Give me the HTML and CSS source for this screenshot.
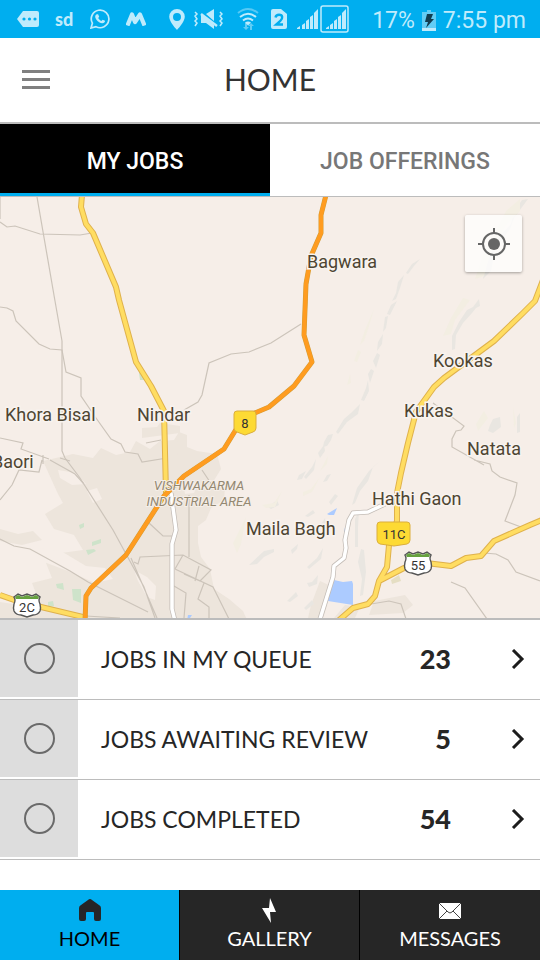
FILE: index.html
```html
<!DOCTYPE html>
<html lang="en">
<head>
    <meta charset="UTF-8">
    <meta name="viewport" content="width=device-width, initial-scale=1.0">
    <title>Home</title>
    <link rel="stylesheet" href="styles.css">
</head>
<body>
    <div class="statusbar">
        <div class="status-group notifications">
            <svg width="22" height="18" viewBox="0 0 22 18"><path fill="currentColor" d="M6 1h14a2 2 0 0 1 2 2v12a2 2 0 0 1-2 2H6L0 9z"/><g fill="#00aeef"><circle cx="7" cy="9" r="1.6"/><circle cx="12.500" cy="9" r="1.600"/><circle cx="18" cy="9" r="1.600"/></g></svg>
            <span class="app-mark">sd</span>
            <svg width="20" height="20" viewBox="0 0 20 20"><path fill="none" stroke="currentColor" stroke-width="1.700" d="M1 19l1.400-4.800A8.800 8.800 0 1 1 6 17.700z"/><path fill="currentColor" d="M6.700 5.300h1.400l1.100 2.500-1 1.300c.8 1.400 1.800 2.300 3.200 2.900l1.200-1.300 2.400 1.100c.2 1.700-1.400 2.700-2.900 2.500-3.500-.7-6.400-3.600-6.900-6.300-.1-1.200.6-2.300 1.500-2.700z"/></svg>
            <svg width="20" height="14" viewBox="0 0 20 14"><path fill="none" stroke="currentColor" stroke-width="4.200" stroke-linejoin="round" d="M1.500 13.500L6 2.500l3 7.500 5-7.500 4.500 11"/></svg>
        </div>
        <div class="status-group system">
            <svg width="16" height="21" viewBox="0 0 16 21"><path fill="currentColor" fill-rule="evenodd" d="M8 0a7.800 7.800 0 0 1 7.800 7.800C15.800 13 8 21 8 21S.2 13 .2 7.800A7.800 7.800 0 0 1 8 0zm0 4a4 4 0 1 0 0 8 4 4 0 0 0 0-8z"/></svg>
            <svg width="30" height="22" viewBox="0 0 30 22"><path fill="currentColor" d="M13 6l8-5v12zM8 7v8h5l8 6v-4L9 7z"/><path stroke="currentColor" stroke-width="2.400" d="M8 6l16 12"/><path fill="none" stroke="currentColor" stroke-width="1.500" d="M2 4l2 2-2 2 2 3-2 2 2 2-2 3M27 4l2 2-2 2 2 3-2 2 2 2-2 3"/></svg>
            <svg width="32" height="24" viewBox="0 0 32 24"><g fill="none" stroke="currentColor" stroke-width="2"><path opacity=".45" d="M7 6q10-8 20 0"/><path d="M9 10q8-6.500 16 0M12 13.500q5-4 10 0"/></g><path fill="currentColor" d="M14 15.500q3-2 6 0l-3 3z"/><path opacity=".5" fill="currentColor" d="M14 16h2v4h2l-3 3-3-3h2zM19 23v-4h-2l3-3 3 3h-2v4z"/></svg>
            <svg width="18" height="22" viewBox="0 0 18 22"><path fill="currentColor" d="M2 1h8l6 5v13a2 2 0 0 1-2 2H2a2 2 0 0 1-2-2V3a2 2 0 0 1 2-2z"/><path fill="none" stroke="#00aeef" stroke-width="2.400" d="M4.500 9.500Q5 6.800 8 6.800c4 0 4 3.700 1.300 6L5.200 16.500H12"/></svg>
            <svg width="52" height="28" viewBox="0 0 52 28"><path fill="currentColor" d="M0 24v-1l3-2v3zM5 24v-4l3-2v6zM9 24v-8l3-2v10zM13 24V12l3-2v14zM17 24V8l4-4v20zM29 24v-1l3-2v3zM33 24v-4l3-2v6zM37 24v-8l3-2v10zM41 24V12l3-2v14zM45 24V8l4-4v20z"/><rect x="24" y="1" width="27" height="26" rx="2" fill="none" stroke="currentColor" stroke-width="1.500"/></svg>
        </div>
        <div class="status-group clock">
            <span>17%</span>
            <svg width="14" height="21" viewBox="0 0 14 21"><path fill="#62cdf5" d="M0 2h5V0h4v2h5v19H0z"/><path fill="currentColor" d="M0 18h14v3H0z"/><path fill="#123d50" d="M5 4h6L9 9h3l-8 9 2-6H3z"/></svg>
            <span>7:55 pm</span>
        </div>
    </div>

    <header class="header">
        <button type="button" class="menu-button" aria-label="Menu"><span></span><span></span><span></span></button>
        <h1>HOME</h1>
    </header>

    <nav class="tabs">
        <a href="#my-jobs" class="tab active">MY JOBS</a>
        <a href="#offerings" class="tab">JOB OFFERINGS</a>
    </nav>

    <main>
        <section class="map">
            <svg class="map-canvas" viewBox="0 197 540 421" preserveAspectRatio="xMidYMid slice">
                <rect y="197" width="540" height="421" fill="#f6eee8"/>

                <!-- built-up areas -->
                <g fill="#ede5dc">
                    <path d="M43 461l30-7 20 4 8-10 15 7 14-3 6-11 14 8 10-8 14-1 5-8 8 3v12l10 4 20 3 4 15-8 13 12 6-1 12-13 8-5 12-8 6v17l3 14 9 12 4 20 15 10 14 12 8 18H0v-27l20 3 17-9-5-13 20-5-6-15 15-10 22-3-9-15-20-6-9-15 18-11-5-9z"/>
                    <path d="M142 428l15-1 3-4 20 3v7l-38 5zM177 440l10 7v16l-9 5zM0 529l18 5 15-3 9 9-20 5-22-4z"/>
                    <path d="M320 581l11 5-4 20-4 12h-15l3-13zM374 601l31-6 8 10-10 8-34 2zM345 605l15 2-5 11h-21z"/>
                </g>
                <path fill="#f6eee8" d="M36 548l25 3 25 15 19 2 8 11-18 4-27-12-24-9zM134 570l13 7 9 9-1 14-8-3-9-16zM87 491l10-3 5 11-9 4zM58 470l18 3 10 11-14 1-12-7zM199 482l-5 11-9 1-2-10z"/>

                <!-- hills -->
                <g fill="#e9e6e1">
                    <path d="M528 199l-6 1-8 12-3 12-12 13-13 26-3 16 8-8 4-22 15-20 4-11zM479 299l-6 8-6 3-8 12-7 14v14l3-1 1-14 7-12 9-10 4-5 4-2z"/>
                    <path d="M420 259l-8 5-6 9 2 1 6-8zM404 275l-6 7-2 11-4 8 4-2 4-11z"/>
                    <path d="M397 301l-6 4-4 9 3 1 4-8zM388 316l-3 1-2 15 3-4zM383 334l-5 8-1 9 5-7zM377 353l-4 8 3 7 4-13zM371 369l-3 5 2 9 4-12zM368 380l-2 8-5 12 3 1 5-10zM360 404l-9 9-7 6-8 13 2 2 9-12 11-8z"/>
                    <path d="M333 434l-5 1-4 7-1 5 4-1 4-6zM324 445l-6 8 2 5 5-7zM316 459l-4 8-8 10 2 2 8-9z"/>
                    <path d="M493 419l7-2 1 10-8 6-5-2 2-6zM517 417l3-4v19l-3 1zM380 461l-7 6-5 14-8 10-5 12-3 2 5-17 12-17zM359 511l-4 8v28h3v-20zM361 549l-3 13 4 17-2 17 3-1 3-23-2-22z"/>
                    <path d="M264 551l-15 14 8-1 7-7 10-5v-3zM306 471l-7 4-2 5 5-1zM313 510l-8 6 3 1 7-4zM325 518l-5 8-7 5h4l9-8zM298 544l-7 6 1 4 5-5zM323 548l-6 10-10 9 2 2 12-10zM296 592l-9 9 3 1 8-6zM312 600l-8 8 2 2 8-6zM277 500l-9 7 3 2 8-4zM335 494l-6 8 2 3 7-9zM301 525l-7 4 1 4 8-4zM318 575l-6 7-5 1 2 4 8-3zM327 475l-4 7 4-1 4-7z"/>
                </g>
                <g fill="#f3eee2">
                    <path d="M520 199l-14 12-10 20-13 24-8 24 9-3 8-28 15-24 13-13zM470 300l-15 20-4 14-8 2 8-18 12-20zM374 309l-9 21-5 15 4-4 5-15zM358 350l-4 11 3 1 4-10zM350 374l-3 11 4-2zM484 411l-8 13 2 7 10-13zM513 407l3 16-2 5z"/>
                    <path d="M246 517l-9 18-4 8 4 10 4-9zM282 491l-8 12-12 2 4 3 9-1zM320 477l-9 12-8 3v4l9-4zM328 456l-8 15 7-7z"/>
                </g>
                <g fill="#cee3ca"><path d="M139 373h5v7h-4zM79 525l5-2v4l-4 2zM92 542l9-3v4l-9 3zM86 550l8-1 2 2-8 4zM56 584l7-1 1 7-7-2zM48 602l5-1 1 5-6 1zM72 589h9v14l-8-3z"/></g>

                <path fill="#accbff" d="M334 580l9 2 9-1 1 3v21l-25-4 3-14zM337 508l-10 6 2 1h5zM345 527l1 6-2-1zM188 615h4l-2 3-3 3z"/>
                <path fill="#e5dec3" d="M391 580l8-5 2 6-9 3z"/>

                <!-- local roads -->
                <g fill="none" stroke="#ccc4ba" stroke-width="1.200">
                    <path d="M0 222l7 5 8-1 25 8 40 1 12-2M0 197v22"/>
                    <path d="M37 197l18 104 7 40v110l3 7 15 20 33 52 31 57 11 31M131 558l26 60"/>
                    <path d="M0 307l7 1 6 3 3 10 23 23 11 5 12 1 4 22 15 6v18l15 22 15 21 10 5 4 8 13 2 4 8 25-4"/>
                    <path d="M0 438l23 5-2 6 28 10M42 460l-3 12-20-2-7 15-12 15M43 455v9M70 461l-10-3"/>
                    <path d="M50 460l25 14 9 10M0 539l14 7 16 3 40 22 18 11 60 30M86 616l34 2M161 440l-15 3M184 410l14-8 4-7 7-32 22-9 18-2 22-9 30-19"/>
                    <path d="M149 523l14 13h10M189 495v62M134 562l4 2 2-7 43-2 28 15-11 11-16-7 0 0M195 581l4-15M183 555l-8 14M175 569l38 18 16 32M204 583l-6 16 11 8v12M174 586l12 7-2 25"/>
                    <path d="M433 403l31 23-3 4-5 1-4 8v8l32 18M474 460l16 4 2 7 8 6 17 6-2 12-10 26 16 6M484 553l12 1 12 6 8 12 24 9M451 582l14 6 22 31M371 604l18-3 12 3 5 15M202 470l12 18"/>
                </g>
                <path fill="none" stroke="#c3bcb6" stroke-width="5" stroke-linejoin="round" d="M171 493l5 37-4 14v65l3 12M385 504l-17 8-15 1-4 7-4 20 1 8-2 10-10 8-1 11-13 42"/>
                <path fill="none" stroke="#fff" stroke-width="3.500" stroke-linejoin="round" d="M171 493l5 37-4 14v65l3 12M385 504l-17 8-15 1-4 7-4 20 1 8-2 10-10 8-1 11-13 42"/>

                <!-- state roads, then the national highway -->
                <g fill="none" stroke-linejoin="round">
                    <path stroke="#dfb14c" stroke-width="6" d="M82 195l-1 12 5 17 7 9 23 54 3 13 17 62 15 24 13 25 2 82M543 280l-8 21-12 12-29 28-50 37-10 9-18 25-8 31-7 30-4 20v28l-8 24-2 22-8 14-4 15-7 8-15 4-15 13M379 581l25-13 14-6 33 4 15-8 15-2 13-15 36-16 12-5M0 595l20 7 67 16"/>
                    <path stroke="#ffdd62" stroke-width="4" d="M82 195l-1 12 5 17 7 9 23 54 3 13 17 62 15 24 13 25 2 82M543 280l-8 21-12 12-29 28-50 37-10 9-18 25-8 31-7 30-4 20v28l-8 24-2 22-8 14-4 15-7 8-15 4-15 13M379 581l25-13 14-6 33 4 15-8 15-2 13-15 36-16 12-5M0 595l20 7 67 16"/>
                    <path stroke="#d49c35" stroke-width="5" d="M326 195l-5 20v18l-10 23-5 28-2 51 8 27-18 24-25 21-26 11-19 31-40 27-20 20-38 59-35 33-5 8-1 26"/>
                    <path stroke="#ff9c20" stroke-width="4" d="M326 195l-5 20v18l-10 23-5 28-2 51 8 27-18 24-25 21-26 11-19 31-40 27-20 20-38 59-35 33-5 8-1 26"/>
                </g>

                <!-- road shields -->
                <g class="shield-text">
                    <path fill="#fdda34" stroke="#dbae3c" d="M237 411h16q3 0 3 3v14q0 3-3 4l-8 3-8-3q-3-1-3-4v-14q0-3 3-3z"/>
                    <text x="245" y="428">8</text>
                    <path fill="#fdda34" stroke="#dbae3c" d="M380 522h27q3 0 3 3v15q0 3-3 4l-13 2-14-2q-3-1-3-4v-15q0-3 3-3z"/>
                    <text x="394" y="539">11C</text>
                    <g id="shield"><path fill="#fff" stroke="#555" stroke-width="1.400" d="M405 555l4-3 4 2 5-2 5 2 4-2 4 3q-2 3 0 7 1 4 0 7-2 4-7 4l-6 2-6-2q-5 0-7-4-1-3 0-7 2-4 0-7z"/><path fill="#66a13f" d="M406 555l3-2 4 2 5-2 5 2 4-2 3 2-1 2h-22z"/></g>
                    <text x="418" y="570">55</text>
                    <use href="#shield" x="-391" y="42"/>
                    <text x="27" y="612">2C</text>
                </g>

                <g class="place">
                    <text x="307" y="268">Bagwara</text>
                    <text x="433" y="367">Kookas</text>
                    <text x="404" y="417">Kukas</text>
                    <text x="5" y="421">Khora Bisal</text>
                    <text x="137" y="421">Nindar</text>
                    <text x="467" y="455">Natata</text>
                    <text x="-8" y="468">Baori</text>
                    <text x="372" y="505">Hathi Gaon</text>
                    <text x="246" y="535">Maila Bagh</text>
                </g>
                <g class="area">
                    <text x="199" y="490">VISHWAKARMA</text>
                    <text x="199" y="506">INDUSTRIAL AREA</text>
                </g>
            </svg>
            <button type="button" class="locate" aria-label="My location">
                <svg width="32" height="32" viewBox="0 0 32 32"><circle cx="16" cy="16" r="6" fill="#666"/><circle cx="16" cy="16" r="11" fill="none" stroke="#666" stroke-width="2"/><path stroke="#666" stroke-width="2" d="M16 0v5M16 27v5M0 16h5M27 16h5"/></svg>
            </button>
        </section>

        <ul class="jobs">
            <li>
                <div class="pick"><input type="radio" name="jobs" id="queue"></div>
                <label for="queue">JOBS IN MY QUEUE</label>
                <span class="count">23</span>
                <a href="#queue" class="open" aria-label="Open jobs in my queue"><svg width="14" height="20" viewBox="0 0 14 20"><path d="M2 1l9 9-9 9"/></svg></a>
            </li>
            <li>
                <div class="pick"><input type="radio" name="jobs" id="review"></div>
                <label for="review">JOBS AWAITING REVIEW</label>
                <span class="count">5</span>
                <a href="#review" class="open" aria-label="Open jobs awaiting review"><svg width="14" height="20" viewBox="0 0 14 20"><path d="M2 1l9 9-9 9"/></svg></a>
            </li>
            <li>
                <div class="pick"><input type="radio" name="jobs" id="completed"></div>
                <label for="completed">JOBS COMPLETED</label>
                <span class="count">54</span>
                <a href="#completed" class="open" aria-label="Open completed jobs"><svg width="14" height="20" viewBox="0 0 14 20"><path d="M2 1l9 9-9 9"/></svg></a>
            </li>
        </ul>
    </main>

    <nav class="bottom-nav">
        <a href="#home" class="active">
            <svg width="24" height="26" viewBox="0 0 24 26"><path fill="#262626" d="M12 2q1 0 2 1l7 5q2 1 2 3v11q0 2-2 2h-3q-2 0-2-2v-6q0-1-1-1H9q-1 0-1 1v6q0 2-2 2H3q-2 0-2-2V11q0-2 2-3l7-5q1-1 2-1z"/></svg>
            <span>HOME</span>
        </a>
        <a href="#gallery">
            <svg width="24" height="26" viewBox="0 0 24 26"><path fill="#fff" d="M12 1l6 14h-6l1 11L4 11h7z"/></svg>
            <span>GALLERY</span>
        </a>
        <a href="#messages">
            <svg width="24" height="26" viewBox="0 0 24 26"><path fill="#fff" d="M1 6h22v16H1z"/><path fill="none" stroke="#444" d="M1 6l9 9q2 2 4 0l9-9M1 22l8-8M23 22l-8-8"/></svg>
            <span>MESSAGES</span>
        </a>
    </nav>
</body>
</html>
```

FILE: styles.css
```css
* {
    box-sizing: border-box;
}
body {
    margin: 0;
    min-height: 100vh;
    display: flex;
    flex-direction: column;
    background-color: #fff;
    color: #262626;
    font-family: Lato, sans-serif;
}
a {
    color: inherit;
    text-decoration: none;
}
svg {
    display: block;
    flex-shrink: 0;
}
button {
    border: none;
    padding: 0;
    cursor: pointer;
}

.statusbar {
    display: flex;
    height: 38px;
    padding: 0 14px 0 17px;
    background-color: #00aeef;
    color: #bfebfc;
    white-space: nowrap;
}
.status-group {
    display: flex;
    align-items: center;
    gap: 8px;
}
.notifications {
    gap: 16px;
}
.app-mark {
    width: 19px;
    font-size: 18px;
    font-weight: 900;
}
.system {
    margin-left: 23px;
}
.clock {
    gap: 7px;
    margin-left: auto;
    padding-top: 2px;
    font-family: Roboto, sans-serif;
    font-size: 23px;
}

.header {
    display: grid;
    grid-template-columns: 72px 1fr 72px;
    align-items: center;
    height: 86px;
    padding-bottom: 2px;
    border-bottom: 2px solid #bcbcbc;
}
.header h1 {
    margin: 0;
    font-size: 30px;
    font-weight: normal;
    line-height: 36px;
    text-align: center;
    color: #333;
}
.menu-button {
    display: flex;
    flex-direction: column;
    justify-content: center;
    gap: 5px;
    width: 72px;
    height: 48px;
    padding: 0 22px;
    background: none;
}
.menu-button span {
    height: 3px;
    background-color: #808080;
}

.tabs {
    display: flex;
    height: 73px;
    border-bottom: 1px solid #bcbcbc;
    font-family: Roboto, sans-serif;
    font-size: 23px;
    font-weight: 500;
}
.tab {
    flex: 1;
    display: flex;
    align-items: center;
    justify-content: center;
    padding-top: 5px;
    border-bottom: 3px solid transparent;
    color: #777;
}
.tab.active {
    background-color: #000;
    border-color: #00aeef;
    color: #fff;
}

main {
    flex: 1;
    display: flex;
    flex-direction: column;
    padding-bottom: 30px;
}
.map {
    position: relative;
    flex: 1;
    display: flex;
    min-height: 200px;
    border-bottom: 2px solid #bcbcbc;
    overflow: hidden;
}
.map-canvas {
    width: 100%;
    height: 100%;
    font-family: Roboto, sans-serif;
}
.place {
    font-size: 18px;
    fill: #4e4532;
    stroke: #f8f3ef;
    stroke-width: 3px;
    paint-order: stroke;
}
.area {
    font-size: 13px;
    font-style: italic;
    text-anchor: middle;
    fill: #938871;
    stroke: #f5eee8;
    stroke-width: 2px;
    paint-order: stroke;
}
.shield-text text {
    font-size: 13px;
    text-anchor: middle;
    fill: #333;
}
.locate {
    position: absolute;
    top: 18px;
    right: 18px;
    display: flex;
    align-items: center;
    justify-content: center;
    width: 57px;
    height: 57px;
    border-radius: 2px;
    background-color: rgba(255, 255, 255, 0.75);
    box-shadow: 0 1px 3px rgba(0, 0, 0, 0.35);
}

.jobs {
    margin: 0;
    padding: 0;
    list-style: none;
}
.jobs li {
    display: flex;
    align-items: center;
    height: 80px;
    padding-bottom: 2px;
    border-bottom: 1px solid #bcbcbc;
}
.pick {
    display: flex;
    align-items: center;
    justify-content: center;
    width: 78px;
    height: 77px;
    background-color: #ddd;
}
.pick input {
    appearance: none;
    width: 31px;
    height: 31px;
    margin: 0;
    border: 2px solid #6a6a6a;
    border-radius: 50%;
}
.pick input:checked {
    background-color: #00aeef;
}
.jobs label {
    flex: 1;
    padding-left: 23px;
    font-size: 23px;
}
.count {
    font-size: 27px;
    font-weight: 900;
}
.open {
    padding: 20px 15px 20px 60px;
}
.open path {
    fill: none;
    stroke: #1c1c1c;
    stroke-width: 3;
}

.bottom-nav {
    display: grid;
    grid-template-columns: repeat(3, 1fr);
    height: 70px;
    background-color: #262626;
    color: #fff;
    font-size: 20px;
    line-height: 24px;
}
.bottom-nav a {
    display: flex;
    flex-direction: column;
    align-items: center;
    gap: 3px;
    padding-top: 7px;
    border-right: 1px solid #000;
}
.bottom-nav a:last-child {
    border-right: none;
}
.bottom-nav .active {
    background-color: #00aeef;
    color: #000;
}
```
